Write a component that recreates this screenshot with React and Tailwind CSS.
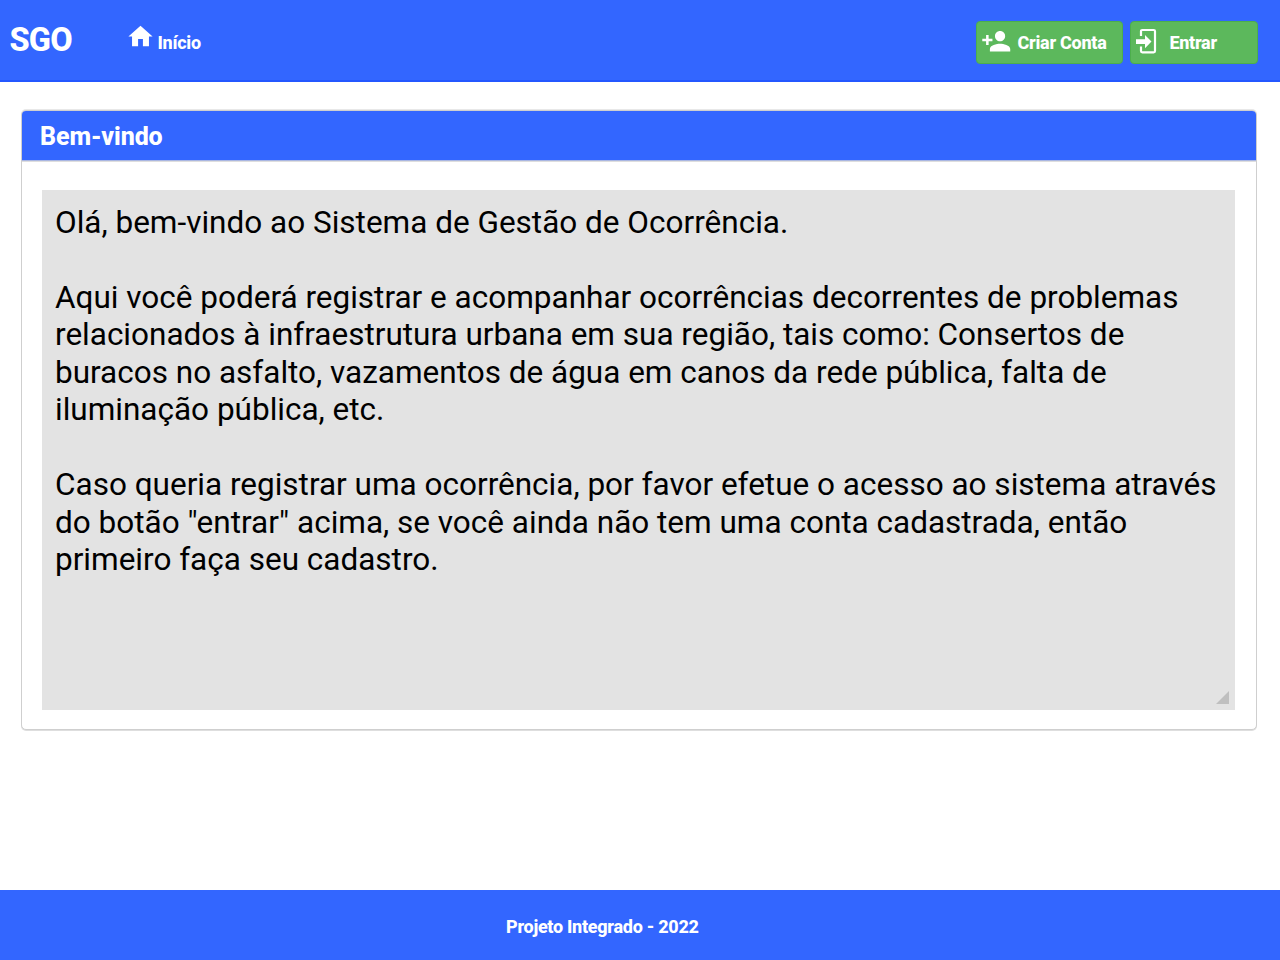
import React from 'react';

const HomeIcon = () => (
  <svg className="ml-[125.5px] mt-[22px] h-[29px] w-[29px] shrink-0" viewBox="0 0 24 24" fill="currentColor">
    <path d="M10 20v-6h4v6h5v-8h3L12 3 2 12h3v8z" />
  </svg>
);

const PersonAddIcon = () => (
  <svg className="ml-1 mt-1 h-[30.5px] w-[30.5px] shrink-0" viewBox="0 0 24 24" fill="currentColor">
    <path d="M15 12c2.21 0 4-1.79 4-4s-1.79-4-4-4-4 1.79-4 4 1.79 4 4 4zm-9-2V7H4v3H1v2h3v3h2v-3h3v-2H6zm9 4c-2.67 0-8 1.34-8 4v2h16v-2c0-2.66-5.33-4-8-4z" />
  </svg>
);

const LoginIcon = () => (
  <svg className="ml-[5px] mt-[6px] h-[26px] w-[22px] shrink-0" viewBox="0 0 22 26" fill="none">
    <path d="M5 8V3.3Q5 2 6.3 2H17.7Q19 2 19 3.3V23.1Q19 24.4 17.7 24.4H6.3Q5 24.4 5 23.1V18.5" stroke="currentColor" strokeWidth="2.2" />
    <path d="M0 11.2H9V7L15.5 13.6L9 20.2V16H0Z" fill="currentColor" />
  </svg>
);

const paragraphs = [
  ['Olá, bem-vindo ao Sistema de Gestão de Ocorrência.'],
  [
    'Aqui você poderá registrar e acompanhar ocorrências decorrentes de problemas',
    'relacionados à infraestrutura urbana em sua região, tais como: Consertos de',
    'buracos no asfalto, vazamentos de água em canos da rede pública, falta de',
    'iluminação pública, etc.',
  ],
  [
    'Caso queria registrar uma ocorrência, por favor efetue o acesso ao sistema através',
    'do botão "entrar" acima, se você ainda não tem uma conta cadastrada, então',
    'primeiro faça seu cadastro.',
  ],
];

export default function App() {
  return (
    <div className="flex h-[960px] w-[1280px] flex-col overflow-hidden bg-white font-['Roboto',sans-serif]">
      <header className="flex h-[82px] shrink-0 items-start justify-between border-b-2 border-[#2457ff] bg-[#3366ff] pr-[22px] text-white">
        <nav className="flex items-start">
          <div className="w-0 whitespace-nowrap pt-5 text-[32.5px] leading-10 font-extrabold tracking-[-0.8px]">
            <span className="ml-[9.5px]">SGO</span>
          </div>
          <HomeIcon />
          <span className="ml-[3px] mt-[31px] text-[18px] leading-6 font-extrabold tracking-[-0.26px]">Início</span>
        </nav>
        <div className="mt-[21px] flex gap-[7px]">
          <button className="flex h-[43px] w-[147px] items-start rounded-[4px] border border-[#4cae4c] bg-[#5cb85c]">
            <PersonAddIcon />
            <span className="ml-[6px] mt-[9px] whitespace-nowrap text-[18px] leading-6 font-extrabold tracking-[-0.26px]">Criar Conta</span>
          </button>
          <button className="flex h-[43px] w-[128px] items-start rounded-[4px] border border-[#4cae4c] bg-[#5cb85c]">
            <LoginIcon />
            <span className="ml-[11.5px] mt-[9px] text-[18px] leading-6 font-extrabold tracking-[-0.3px]">Entrar</span>
          </button>
        </div>
      </header>

      <main className="flex-1 pt-[28px] pl-[21px]">
        <section className="h-[620px] w-[1236px] overflow-hidden rounded-[5px] border border-[#cfcfcf] bg-white shadow-[0_1px_0_0_#dedede,0_-1px_0_0_#e8e8e8]">
          <h1 className="h-[50px] border-b border-[#a9b6e2] bg-[#3366ff] pl-[18px] text-[25px] leading-[51px] font-extrabold tracking-[-0.1px] text-white shadow-[0_1px_0_0_#dedede]">
            Bem-vindo
          </h1>
          <div className="relative mt-[29px] ml-[20px] h-[520px] w-[1193px] bg-[#e3e3e3] pt-[13.5px] pl-[13px] text-[31.5px] leading-[37.5px] text-black">
            {paragraphs.map((lines) => (
              <p key={lines[0]} className="mb-[37.5px]">
                {lines.map((line) => (
                  <span key={line} className="block whitespace-nowrap">{line}</span>
                ))}
              </p>
            ))}
            <svg className="absolute right-[6px] bottom-[6px] h-[13px] w-[13px]" viewBox="0 0 13 13">
              <path d="M13 0V13H0Z" fill="#bfbfbf" />
            </svg>
          </div>
        </section>
      </main>

      <footer className="h-[70px] shrink-0 bg-[#3366ff] pt-[25px] pl-[506px] text-[18px] leading-6 font-extrabold tracking-[-0.28px] text-white">
        Projeto Integrado - 2022
      </footer>
    </div>
  );
}
